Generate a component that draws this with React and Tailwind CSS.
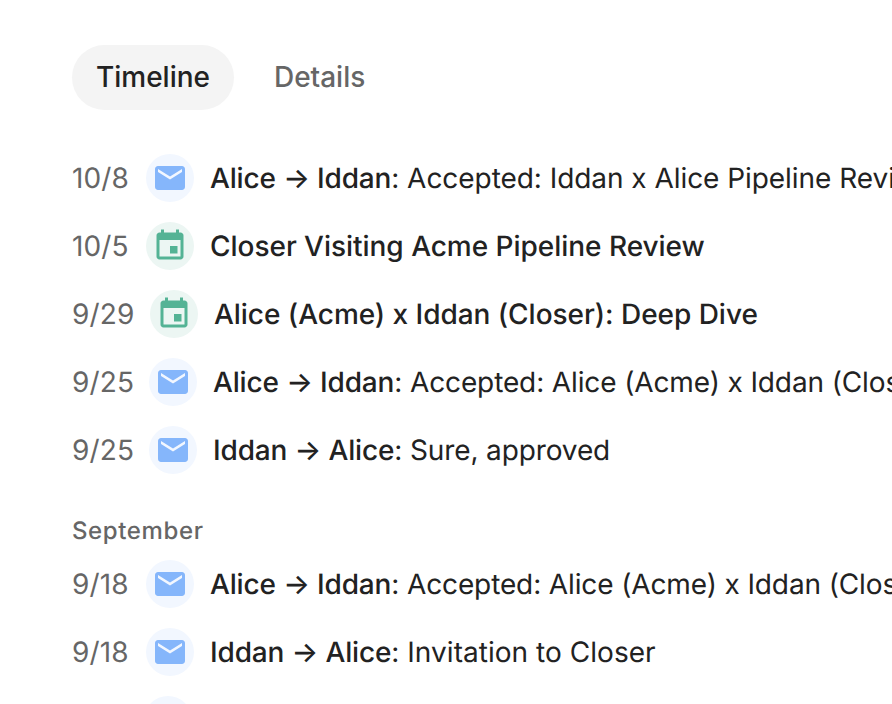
const BLUE = 'bg-[#f2f7ff]';
const GREEN = 'bg-[#ecf6f3]';

function MailIcon() {
  return (
    <svg viewBox="0 0 24 24" className="size-9 fill-[#85b6fb]">
      <path d="M20 4H4c-1.1 0-1.99.9-1.99 2L2 18c0 1.1.9 2 2 2h16c1.1 0 2-.9 2-2V6c0-1.1-.9-2-2-2zm0 4l-8 5-8-5V6l8 5 8-5v2z" />
    </svg>
  );
}

function EventIcon() {
  return (
    <svg viewBox="0 0 24 24" className="size-9 fill-[#54b395]">
      <path d="M17 12h-5v5h5v-5zM16 1v2H8V1H6v2H5c-1.11 0-1.99.9-1.99 2L3 19c0 1.1.89 2 2 2h14c1.1 0 2-.9 2-2V5c0-1.1-.9-2-2-2h-1V1h-2zm3 18H5V8h14v11z" />
    </svg>
  );
}

function Row({ date, event, title, text, dateWidth = 'w-[58px]', tracking = 'tracking-[-0.12px]' }) {
  return (
    <div className="flex h-17 items-center whitespace-nowrap">
      <span className={`shrink-0 tracking-[0.15px] text-[#666] ${dateWidth}`}>{date}</span>
      <span className={`ml-4 mr-4 flex size-12 shrink-0 items-center justify-center rounded-full ${event ? GREEN : BLUE}`}>
        {event ? <EventIcon /> : <MailIcon />}
      </span>
      <span className={`font-medium ${text ? 'tracking-[-0.15px]' : 'tracking-[-0.03px]'}`}>{title}</span>
      {text && <span className={`whitespace-pre ${tracking}`}>: {text}</span>}
    </div>
  );
}

export default function App() {
  return (
    <main className="h-[704px] w-[892px] overflow-hidden bg-white pl-18 pt-[45px] font-['Inter',sans-serif] text-[28px] leading-[34px] text-[#222] [text-rendering:geometricPrecision]">
      <nav className="flex h-[65px] items-center font-medium tracking-[-0.03px]">
        <button className="flex h-[65px] w-[162px] items-center justify-center rounded-full bg-[#f4f4f4] pb-px">Timeline</button>
        <button className="ml-10 pb-px text-[#666]">Details</button>
      </nav>
      <section className="mt-[34px]">
        <Row date="10/8" title="Alice → Iddan" text="Accepted: Iddan x Alice Pipeline Revi" tracking="tracking-[-0.05px]" />
        <Row date="10/5" event title="Closer Visiting Acme Pipeline Review" />
        <Row date="9/29" event title="Alice (Acme) x Iddan (Closer): Deep Dive" dateWidth="w-[62px]" />
        <Row date="9/25" title="Alice → Iddan" text="Accepted: Alice (Acme) x Iddan (Closer)" dateWidth="w-[61px]" />
        <Row date="9/25" title="Iddan → Alice" text="Sure, approved" dateWidth="w-[61px]" />
      </section>
      <h2 className="mt-[29px] mb-px h-9 text-2xl font-medium leading-9 tracking-[0.62px] text-[#666]">September</h2>
      <section>
        <Row date="9/18" title="Alice → Iddan" text="Accepted: Alice (Acme) x Iddan (Closer)" />
        <Row date="9/18" title="Iddan → Alice" text="Invitation to Closer" tracking="tracking-[0.04px]" />
        <Row date="9/17" title="Alice → Iddan" text="Pipeline Review" dateWidth="w-[56px]" />
      </section>
    </main>
  );
}
